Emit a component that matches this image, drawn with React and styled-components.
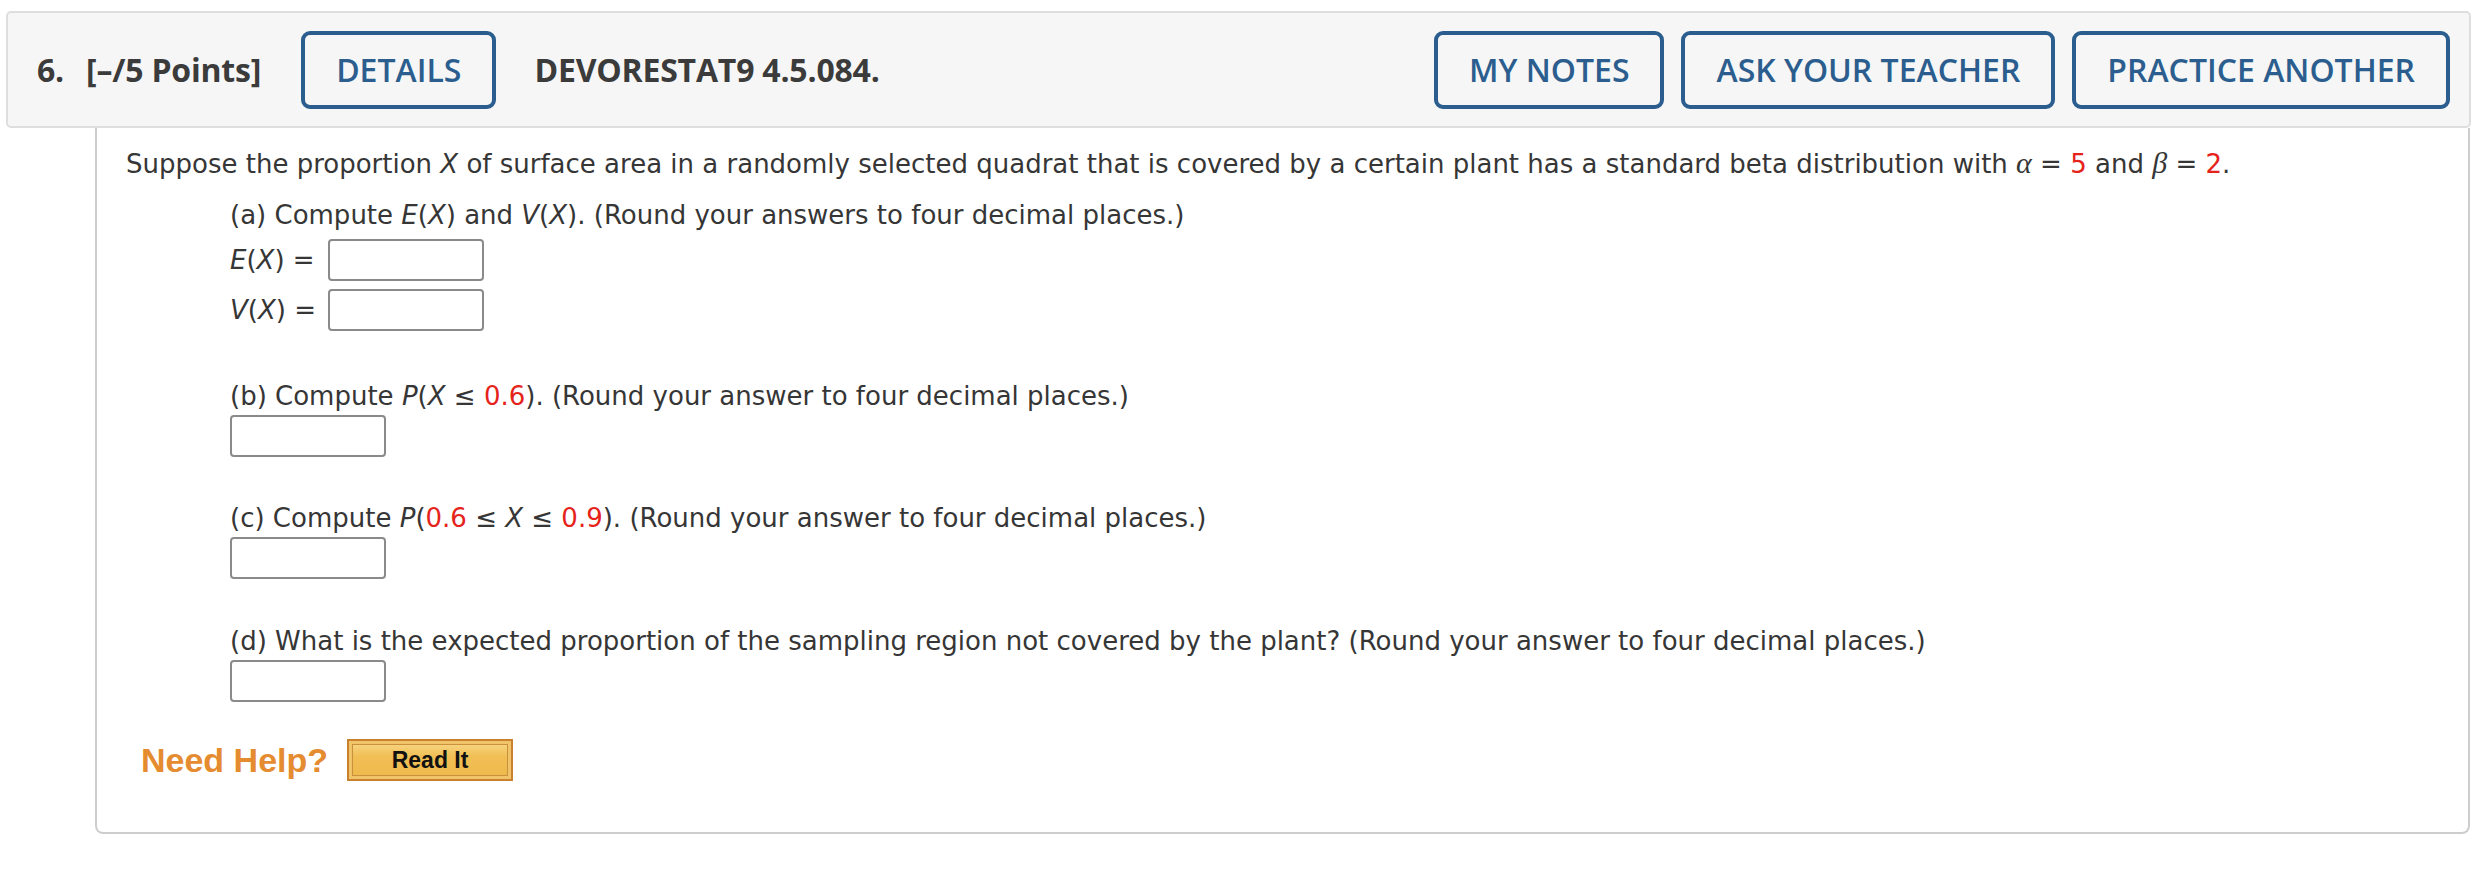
import React from "react";
import styled, { createGlobalStyle } from "styled-components";

const GlobalStyle = createGlobalStyle`
  html, body {
    margin: 0;
    padding: 0;
    background: #fff;
  }
`;

const Page = styled.div`
  width: 2472px;
  padding: 11px 0 0 6px;
  box-sizing: border-box;
`;

const Header = styled.header`
  height: 117px;
  margin-right: 1px;
  box-sizing: border-box;
  display: flex;
  align-items: center;
  padding: 0 19px 0 29px;
  background-color: #f6f6f6;
  border: 2px solid #dedede;
  border-radius: 5px;
  font-family: "Open Sans", "Liberation Sans", sans-serif;
  font-size: 32px;
  color: #3b3b3b;
`;

const Title = styled.h2`
  margin: 0 40px 0 0;
  font-size: 32px;
  font-weight: 700;
  letter-spacing: -0.2px;
  span {
    margin-right: 22px;
  }
`;

const Code = styled.h3`
  margin: 0 0 0 38px;
  font-size: 32px;
  font-weight: 700;
  letter-spacing: -0.2px;
`;

const Actions = styled.div`
  margin-left: auto;
  display: flex;
  gap: 17px;
`;

const OutlineButton = styled.button`
  height: 78px;
  box-sizing: border-box;
  padding: 0 31px;
  border: 4px solid #2b5e8e;
  border-radius: 9px;
  background: transparent;
  color: #2b5e8e;
  font-family: "Open Sans", "Liberation Sans", sans-serif;
  font-size: 32px;
  font-weight: 600;
  white-space: nowrap;
`;

const Body = styled.section`
  margin: 0 2px 0 89px;
  padding: 16px 29px 51px;
  box-sizing: border-box;
  border: 2px solid #cdcdcd;
  border-top: none;
  border-radius: 0 0 8px 8px;
  font-family: "DejaVu Sans", Verdana, sans-serif;
  font-size: 26px;
  line-height: 38px;
  color: #363636;
`;

const Stem = styled.p`
  margin: 0 0 13px;
`;

const Part = styled.div`
  margin: ${(p) => p.$top || 0}px 0 0 104px;
`;

const Prompt = styled.p`
  margin: 0;
`;

const AnswerRow = styled.div`
  display: flex;
  align-items: center;
  gap: 6px;
  margin-top: ${(p) => p.$top || 0}px;
  label {
    min-width: 92px;
    white-space: nowrap;
  }
`;

const AnswerBox = styled.input`
  width: 156px;
  height: 42px;
  box-sizing: border-box;
  margin: 0;
  border: 2px solid #8a8a8a;
  border-radius: 4px;
  background: #fff;
`;

const Var = styled.i`
  font-style: oblique;
`;

const Greek = styled.i`
  font-family: "Liberation Serif", "DejaVu Serif", serif;
  font-style: italic;
  font-size: 30px;
`;

const Red = styled.span`
  color: #e5231b;
`;

const Help = styled.div`
  display: flex;
  align-items: center;
  gap: 19px;
  margin: 37px 0 0 15px;
`;

const HelpLabel = styled.span`
  font-family: "Liberation Sans", Arial, sans-serif;
  font-size: 34px;
  font-weight: 700;
  color: #e58b30;
`;

const ReadButton = styled.button`
  width: 166px;
  height: 42px;
  box-sizing: border-box;
  border: 2px solid #c7812f;
  background: linear-gradient(#f8d98c, #f1bf55 40%, #efb94b);
  box-shadow: inset 0 0 0 3px #f2c46a, inset 0 0 0 4px #c9913b;
  font-family: "Liberation Sans", Arial, sans-serif;
  font-size: 23px;
  font-weight: 700;
  color: #111;
  padding: 0;
`;

const Question = () => (
  <Body>
    <Stem>
      Suppose the proportion <Var>X</Var> of surface area in a randomly selected quadrat that
      is covered by a certain plant has a standard beta distribution with <Greek>α</Greek> ={" "}
      <Red>5</Red> and <Greek>β</Greek> = <Red>2</Red>.
    </Stem>

    <Part>
      <Prompt>
        (a) Compute <Var>E</Var>(<Var>X</Var>) and <Var>V</Var>(<Var>X</Var>). (Round your
        answers to four decimal places.)
      </Prompt>
      <AnswerRow $top={5}>
        <label>
          <Var>E</Var>(<Var>X</Var>) =
        </label>
        <AnswerBox />
      </AnswerRow>
      <AnswerRow $top={8}>
        <label>
          <Var>V</Var>(<Var>X</Var>) =
        </label>
        <AnswerBox />
      </AnswerRow>
    </Part>

    <Part $top={46}>
      <Prompt>
        (b) Compute <Var>P</Var>(<Var>X</Var> ≤ <Red>0.6</Red>). (Round your answer to four
        decimal places.)
      </Prompt>
      <AnswerRow>
        <AnswerBox />
      </AnswerRow>
    </Part>

    <Part $top={42}>
      <Prompt>
        (c) Compute <Var>P</Var>(<Red>0.6</Red> ≤ <Var>X</Var> ≤ <Red>0.9</Red>). (Round your
        answer to four decimal places.)
      </Prompt>
      <AnswerRow>
        <AnswerBox />
      </AnswerRow>
    </Part>

    <Part $top={43}>
      <Prompt>
        (d) What is the expected proportion of the sampling region not covered by the plant?
        (Round your answer to four decimal places.)
      </Prompt>
      <AnswerRow>
        <AnswerBox />
      </AnswerRow>
    </Part>

    <Help>
      <HelpLabel>Need Help?</HelpLabel>
      <ReadButton>Read It</ReadButton>
    </Help>
  </Body>
);

export default function App() {
  return (
    <>
      <GlobalStyle />
      <Page>
        <Header>
          <Title>
            <span>6.</span>[–/5 Points]
          </Title>
          <OutlineButton>DETAILS</OutlineButton>
          <Code>DEVORESTAT9 4.5.084.</Code>
          <Actions>
            <OutlineButton>MY NOTES</OutlineButton>
            <OutlineButton>ASK YOUR TEACHER</OutlineButton>
            <OutlineButton>PRACTICE ANOTHER</OutlineButton>
          </Actions>
        </Header>
        <Question />
      </Page>
    </>
  );
}
